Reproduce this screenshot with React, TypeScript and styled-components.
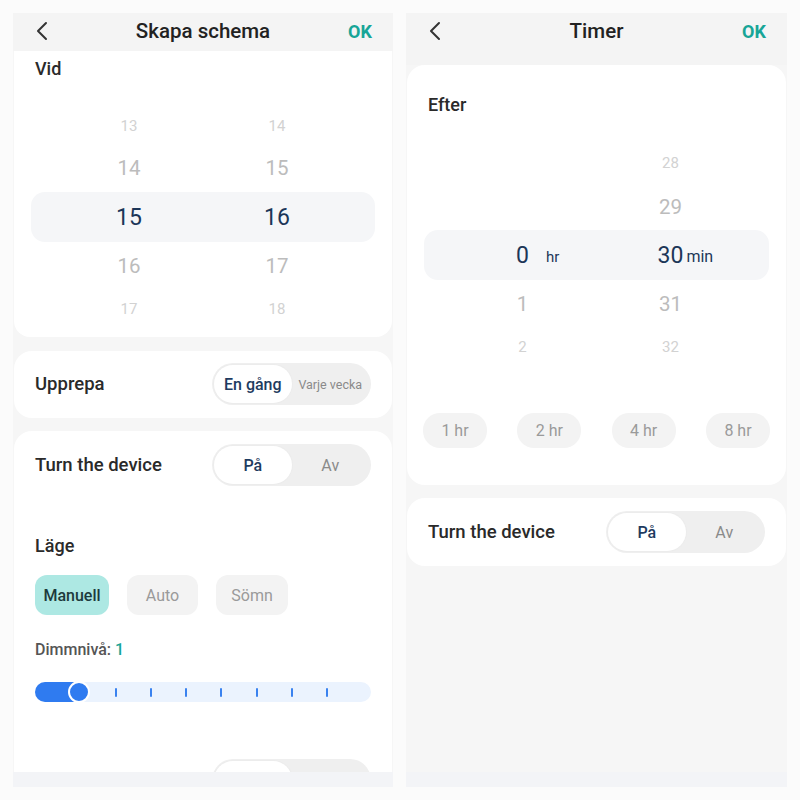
import React from "react";
import styled, { createGlobalStyle } from "styled-components";

const Global = createGlobalStyle`
  html, body { margin: 0; padding: 0; background: #fbfbfb; }
  body { font-family: Roboto, "Noto Sans", "Liberation Sans", sans-serif; }
  * { box-sizing: border-box; }
`;

const Page = styled.div`
  display: flex;
  gap: 13px;
  padding: 13px;
  width: 800px;
  height: 800px;
  background: #fbfbfb;
`;

const Phone = styled.div<{ $w: number }>`
  width: ${(p) => p.$w}px;
  height: 774px;
  background: #f6f6f6;
  display: flex;
  flex-direction: column;
  overflow: hidden;
`;

const Header = styled.div<{ $h: number }>`
  height: ${(p) => p.$h}px;
  flex: none;
  display: grid;
  grid-template-columns: 60px 1fr 60px;
  grid-template-rows: 36px;
  align-items: center;
  background: #f4f4f4;
`;

const Back = styled.div`
  display: flex;
  justify-content: center;
  padding-right: 2px;
`;

const Title = styled.div`
  text-align: center;
  font-size: 20.5px;
  font-weight: 500;
  color: #222;
`;

const Ok = styled.div`
  text-align: center;
  font-size: 18px;
  font-weight: 700;
  color: #17a597;
  padding-right: 6px;
`;

const Scroll = styled.div`
  flex: 1;
  min-height: 0;
  overflow: hidden;
  display: flex;
  flex-direction: column;
  gap: 13px;
`;

const Card = styled.div<{ $flatTop?: boolean; $pt?: number; $pb?: number }>`
  flex: none;
  margin: 0 1px;
  background: #fff;
  border-radius: ${(p) => (p.$flatTop ? "0 0 16px 16px" : "18px")};
  padding: ${(p) => p.$pt ?? 0}px 0 ${(p) => p.$pb ?? 0}px;
  display: flex;
  flex-direction: column;
`;

const Label = styled.div<{ $mt?: number }>`
  margin-top: ${(p) => p.$mt ?? 0}px;
  padding: 0 21px;
  font-size: 18px;
  line-height: 22px;
  font-weight: 500;
  color: #2a2a2a;
`;

const Row = styled.div<{ $pad?: string }>`
  display: flex;
  align-items: center;
  justify-content: space-between;
  padding: ${(p) => p.$pad ?? "0 21px"};
`;

const RowLabel = styled.div`
  font-size: 18.5px;
  font-weight: 500;
  color: #2a2a2a;
`;

const Segment = styled.div`
  width: 159px;
  height: 42px;
  border-radius: 21px;
  background: #efefef;
  padding: 2px;
  display: flex;
`;

const SegItem = styled.div<{ $on?: boolean; $small?: boolean }>`
  flex: 1;
  display: flex;
  align-items: center;
  justify-content: center;
  border-radius: 19px;
  background: ${(p) => (p.$on ? "#fff" : "transparent")};
  box-shadow: ${(p) => (p.$on ? "0 0 0 1px #ececec" : "none")};
  color: ${(p) => (p.$on ? "#1e3b60" : "#8a8a8a")};
  font-size: ${(p) => (p.$small ? 12.5 : 16)}px;
  font-weight: ${(p) => (p.$on ? 500 : 400)};
  white-space: nowrap;
`;

const Picker = styled.div<{ $mt: number }>`
  margin: ${(p) => p.$mt}px 17px 0;
  display: flex;
  flex-direction: column;
`;

const PickRow = styled.div<{ $h: number; $sel?: boolean }>`
  height: ${(p) => p.$h}px;
  display: grid;
  grid-template-columns: 148px 148px;
  justify-content: center;
  align-items: center;
  background: ${(p) => (p.$sel ? "#f5f6f8" : "transparent")};
  border-radius: 14px;
`;

const Num = styled.span<{ $lvl: 0 | 1 | 2 }>`
  position: relative;
  justify-self: center;
  font-size: ${(p) => (p.$lvl === 0 ? 23 : p.$lvl === 1 ? 20.5 : 15)}px;
  color: ${(p) => (p.$lvl === 0 ? "#1c3658" : p.$lvl === 1 ? "#bcbcbc" : "#d2d2d2")};
  line-height: 1;
`;

const Unit = styled.span<{ $gap: number; $size: number }>`
  position: absolute;
  left: 100%;
  bottom: 2px;
  margin-left: ${(p) => p.$gap}px;
  font-size: ${(p) => p.$size}px;
  color: #1c3658;
`;

const Chips = styled.div<{ $mt: number; $spread?: boolean }>`
  margin-top: ${(p) => p.$mt}px;
  padding: 0 ${(p) => (p.$spread ? 16 : 21)}px;
  display: flex;
  gap: 18px;
  justify-content: ${(p) => (p.$spread ? "space-between" : "flex-start")};
`;

const Chip = styled.div<{ $on?: boolean; $w: number; $h: number; $r: number }>`
  width: ${(p) => p.$w}px;
  height: ${(p) => p.$h}px;
  border-radius: ${(p) => p.$r}px;
  display: flex;
  align-items: center;
  justify-content: center;
  background: ${(p) => (p.$on ? "#ade8e3" : "#f3f3f3")};
  color: ${(p) => (p.$on ? "#1d3a3c" : "#9a9a9a")};
  font-size: 16px;
  font-weight: ${(p) => (p.$on ? 500 : 400)};
`;

const Dim = styled.div`
  margin-top: 25px;
  padding: 0 21px;
  font-size: 16px;
  line-height: 20px;
  font-weight: 500;
  color: #555;
  span { color: #17a597; }
`;

const Track = styled.div`
  position: relative;
  margin: 22px 21px 0;
  height: 20px;
  border-radius: 10px;
  background: #ebf3fe;
`;

const Fill = styled.div`
  height: 20px;
  width: 54px;
  border-radius: 10px;
  background: #2f7bf0;
`;

const Thumb = styled.div`
  position: absolute;
  left: 33px;
  top: -1px;
  width: 22px;
  height: 22px;
  border-radius: 50%;
  background: #2f7bf0;
  border: 2px solid #fff;
`;

const Tick = styled.div`
  position: absolute;
  top: 6px;
  width: 2px;
  height: 9px;
  border-radius: 1px;
  background: #3a82ef;
`;

const BottomBar = styled.div`
  flex: none;
  height: 15px;
  background: #f3f4f7;
`;

const Chevron = () => (
  <svg width="14" height="20" viewBox="0 0 14 20">
    <polyline points="11,2 3,10 11,18" fill="none" stroke="#333" strokeWidth="2" strokeLinecap="round" strokeLinejoin="round" />
  </svg>
);

const TopBar = ({ title, h }: { title: string; h: number }) => (
  <Header $h={h}>
    <Back><Chevron /></Back>
    <Title>{title}</Title>
    <Ok>OK</Ok>
  </Header>
);

const levels: (0 | 1 | 2)[] = [2, 1, 0, 1, 2];

const Wheel = ({ rows, heights, mt, units }: { rows: [string, string][]; heights: number[]; mt: number; units?: [string, string] }) => (
  <Picker $mt={mt}>
    {rows.map((r, i) => (
      <PickRow key={i} $h={heights[i]} $sel={i === 2}>
        <Num $lvl={levels[i]}>
          {r[0]}
          {i === 2 && units && <Unit $gap={17} $size={15}>{units[0]}</Unit>}
        </Num>
        <Num $lvl={levels[i]}>
          {r[1]}
          {i === 2 && units && <Unit $gap={3} $size={16}>{units[1]}</Unit>}
        </Num>
      </PickRow>
    ))}
  </Picker>
);

const ticks = [80, 115, 150, 185, 221, 256, 291];

export default function App() {
  return (
    <>
      <Global />
      <Page>
        <Phone $w={380}>
          <TopBar title="Skapa schema" h={38} />
          <Scroll>
            <Card $flatTop $pt={7} $pb={9}>
              <Label>Vid</Label>
              <Wheel
                mt={28}
                heights={[36, 48, 50, 48, 38]}
                rows={[["13", "14"], ["14", "15"], ["15", "16"], ["16", "17"], ["17", "18"]]}
              />
            </Card>
            <Card $pt={12} $pb={13} style={{ marginTop: 1 }}>
              <Row>
                <RowLabel>Upprepa</RowLabel>
                <Segment>
                  <SegItem $on>En gång</SegItem>
                  <SegItem $small>Varje vecka</SegItem>
                </Segment>
              </Row>
            </Card>
            <Card $pt={13} $pb={20}>
              <Row>
                <RowLabel>Turn the device</RowLabel>
                <Segment>
                  <SegItem $on>På</SegItem>
                  <SegItem>Av</SegItem>
                </Segment>
              </Row>
              <Label $mt={49}>Läge</Label>
              <Chips $mt={18}>
                <Chip $on $w={74} $h={40} $r={12}>Manuell</Chip>
                <Chip $w={71} $h={40} $r={12}>Auto</Chip>
                <Chip $w={72} $h={40} $r={12}>Sömn</Chip>
              </Chips>
              <Dim>
                Dimmnivå: <span>1</span>
              </Dim>
              <Track>
                <Fill />
                {ticks.map((t) => (
                  <Tick key={t} style={{ left: t }} />
                ))}
                <Thumb />
              </Track>
              <Row $pad="57px 21px 0">
                <RowLabel />
                <Segment>
                  <SegItem $on />
                  <SegItem />
                </Segment>
              </Row>
            </Card>
          </Scroll>
          <BottomBar />
        </Phone>

        <Phone $w={381}>
          <TopBar title="Timer" h={52} />
          <Scroll>
            <Card $pt={29} $pb={37}>
              <Label>Efter</Label>
              <Wheel
                mt={26}
                heights={[42, 46, 50, 48, 38]}
                units={["hr", "min"]}
                rows={[["", "28"], ["", "29"], ["0", "30"], ["1", "31"], ["2", "32"]]}
              />
              <Chips $mt={47} $spread>
                {["1 hr", "2 hr", "4 hr", "8 hr"].map((c) => (
                  <Chip key={c} $w={64} $h={35} $r={17}>{c}</Chip>
                ))}
              </Chips>
            </Card>
            <Card $pt={13} $pb={13}>
              <Row>
                <RowLabel>Turn the device</RowLabel>
                <Segment>
                  <SegItem $on>På</SegItem>
                  <SegItem>Av</SegItem>
                </Segment>
              </Row>
            </Card>
          </Scroll>
          <BottomBar />
        </Phone>
      </Page>
    </>
  );
}
